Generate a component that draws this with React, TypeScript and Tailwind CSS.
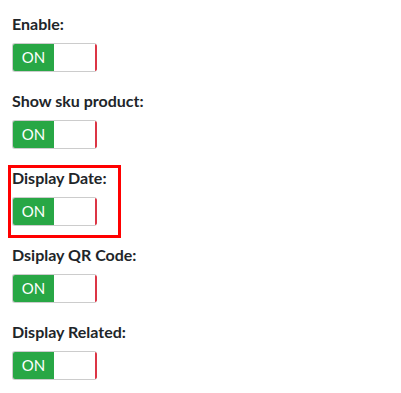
const items = [
  { label: 'Enable:', boxed: false },
  { label: 'Show sku product:', boxed: false },
  { label: 'Display Date:', boxed: true },
  { label: 'Dsiplay QR Code:', boxed: false },
  { label: 'Display Related:', boxed: false },
]

const Toggle = () => (
  <div className="flex h-[29px] w-[85px] overflow-hidden rounded-[3px] border border-[#ccc] border-r-0">
    <div className="flex w-[41px] items-center justify-center bg-[#28a745] text-[15px] text-white">ON</div>
    <div className="flex-1 bg-white" />
    <div className="w-[2px] bg-[#dc3545]" />
  </div>
)

export default function App() {
  return (
    <div className="h-[393px] w-[401px] overflow-hidden bg-white pl-2 pt-[11px] font-['Lato','Liberation_Sans',sans-serif] text-[#212529]">
      {items.map((it) => (
        <div
          key={it.label}
          className={`mb-[4px] w-[113px] border-[3px] pb-[9px] pl-[1px] ${it.boxed ? 'border-[#f00]' : 'border-transparent'}`}
        >
          <div className="mb-[9px] whitespace-nowrap text-[16px] font-bold leading-5">{it.label}</div>
          <Toggle />
        </div>
      ))}
    </div>
  )
}
